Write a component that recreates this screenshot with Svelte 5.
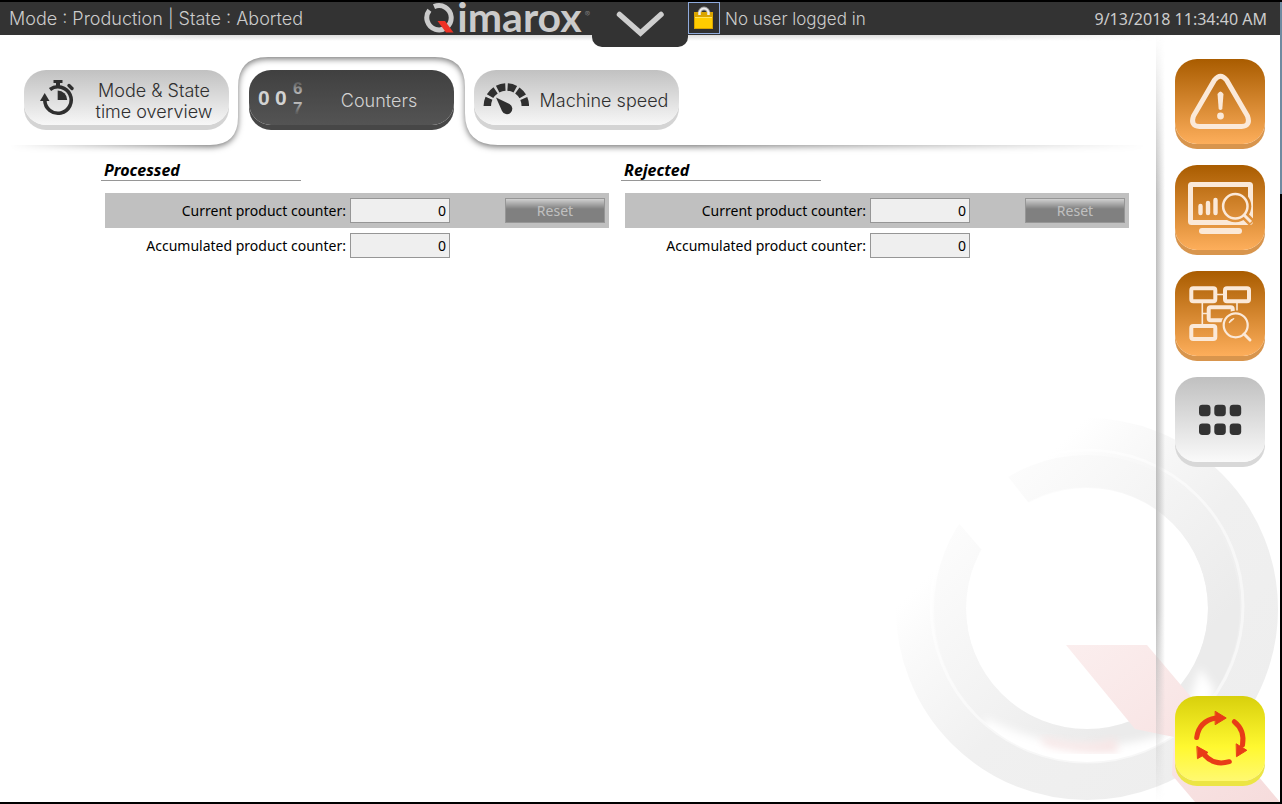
<script>
  let active = $state('counters');
  const groups = [
    { id: 'processed', title: 'Processed', current: 0, accumulated: 0 },
    { id: 'rejected', title: 'Rejected', current: 0, accumulated: 0 }
  ];
</script>

<div class="frame">
  <div class="app">
    <svg class="watermark" viewBox="880 400 400 402" aria-hidden="true">
      <defs>
        <linearGradient id="ring" gradientUnits="userSpaceOnUse" x1="880" y1="400" x2="1280" y2="800">
          <stop offset="0.28" stop-color="#fff" />
          <stop offset="0.36" stop-color="#fafafa" />
          <stop offset="0.56" stop-color="#f0f0f0" />
          <stop offset="1" stop-color="#ededed" />
        </linearGradient>
        <linearGradient id="bevel" gradientUnits="userSpaceOnUse" x1="880" y1="400" x2="1280" y2="800">
          <stop offset="0.2" stop-color="#fefefe" />
          <stop offset="0.36" stop-color="#f8f8f8" />
          <stop offset="0.7" stop-color="#ebebeb" />
        </linearGradient>
        <linearGradient id="tail" x1="0" y1="0" x2="1" y2="1">
          <stop offset="0" stop-color="#fbeeee" />
          <stop offset="1" stop-color="#f6dcdc" />
        </linearGradient>
        <filter id="soft"><feGaussianBlur stdDeviation="4" /></filter>
        <mask id="gap" maskUnits="userSpaceOnUse" x="880" y="400" width="400" height="402">
          <rect x="880" y="400" width="400" height="402" fill="#fff" />
          <path d="M981 549L920 478L975 435L1028 502L1045 560Z" fill="#000" />
        </mask>
        <clipPath id="inner"><path clip-rule="evenodd" d="M934 609a153 153 0 1 0 306 0a153 153 0 1 0-306 0ZM966 608a121 121 0 1 0 242 0a121 121 0 1 0-242 0Z" /></clipPath>
      </defs>
      <g mask="url(#gap)" fill="none">
        <circle cx="1087" cy="609" r="156" stroke="url(#ring)" stroke-width="70" />
        <circle cx="1087" cy="608" r="137" stroke="url(#bevel)" stroke-width="32" />
        <circle cx="1087" cy="606" r="156" stroke="#fff" stroke-opacity="0.5" stroke-width="3" />
      </g>
      <g clip-path="url(#inner)">
        <path d="M985 718Q1085 768 1180 728L1200 668L1215 690L1190 770H980Z" fill="#fff" filter="url(#soft)" />
        <path d="M1040 736Q1085 750 1115 738L1118 752Q1080 754 1045 745Z" fill="#f7e4e4" filter="url(#soft)" />
      </g>
      <path d="M1066 645H1147L1280 802H1195L1172 775L1174 737L1135 729Z" fill="url(#tail)" />
    </svg>

    <header>
      <div class="head-left">
        <span class="status">Mode : Production | State : Aborted</span>
        <div class="logo">
          <svg width="31" height="33" viewBox="0 0 31 33" aria-label="Q">
            <path d="M10 4.600A12.200 12.200 0 1 1 5.400 8.200" fill="none" stroke="#cbcbcb" stroke-width="5" />
            <path d="M13.500 19H21L29.500 30.500H22Z" fill="#ee3124" />
          </svg>
          <span class="word">imarox</span><span class="reg">®</span>
        </div>
      </div>
      <button class="notch" aria-label="Open menu">
        <svg width="96" height="45" viewBox="0 0 96 45"><path d="M27.500 12.500L48.500 31L69 12.500" fill="none" stroke="#cecece" stroke-width="5.500" stroke-linecap="round" /></svg>
      </button>
      <div class="head-right">
        <div class="user">
          <button class="lock" aria-label="Log in">
            <svg width="30" height="30" viewBox="0 0 30 30">
              <path d="M10.500 14V10.500a4.500 5 0 0 1 9 0V14" fill="none" stroke="#999" stroke-width="4" />
              <path d="M10.500 14V10.500a4.500 5 0 0 1 9 0V14" fill="none" stroke="#eee" stroke-width="2" />
              <rect x="5" y="9" width="19" height="17" fill="#d9a400" />
              <path d="M10.500 12V9M19.500 12V9" stroke="#eee" stroke-width="2.500" />
              <rect x="6" y="14" width="17" height="11" fill="#fc0" />
              <path d="M6 14.500H23" stroke="#ffe45c" />
            </svg>
          </button>
          <span>No user logged in</span>
        </div>
        <time>9/13/2018 11:34:40 AM</time>
      </div>
    </header>

    <div class="body">
      <main>
        <nav>
          <svg class="sheet" aria-hidden="true">
            <path d="M-20 -60V110H210Q238 110 238 82V52Q238 22 268 22H435Q465 22 465 52V78Q465 110 498 110H4000V-60Z" fill="#fff" />
          </svg>
          <button class="tab" class:on={active === 'mode'} onclick={() => (active = 'mode')}>
            <svg width="55" height="55" viewBox="0 0 55 55" fill="none" stroke="currentColor">
              <path d="M26 19.500A13.200 13.200 0 1 1 20.800 30" stroke-width="3.600" />
              <path d="M16 31L20.700 23L25.500 31Z" fill="currentColor" stroke="none" />
              <path d="M29.500 11.500H38.500" stroke-width="3" />
              <path d="M34 12V17" stroke-width="4" />
              <path d="M45 15.500L48 18.500" stroke-width="3.400" stroke-linecap="round" />
              <path d="M33.700 30V20.500A9.500 9.500 0 0 1 43.200 30Z" fill="currentColor" stroke="none" />
            </svg>
            <span>Mode &amp; State<br />time overview</span>
          </button>
          <button class="tab" class:on={active === 'counters'} onclick={() => (active = 'counters')}>
            <svg class="digits" width="55" height="55" viewBox="0 0 55 55">
              <defs>
                <linearGradient id="fadeUp" gradientUnits="userSpaceOnUse" x1="0" y1="11" x2="0" y2="25"><stop offset="0" stop-color="currentColor" stop-opacity="0.1" /><stop offset="1" stop-color="currentColor" stop-opacity="0.9" /></linearGradient>
                <linearGradient id="fadeDown" gradientUnits="userSpaceOnUse" x1="0" y1="30" x2="0" y2="43"><stop offset="0" stop-color="currentColor" /><stop offset="1" stop-color="currentColor" stop-opacity="0.1" /></linearGradient>
              </defs>
              <text x="9" y="35" fill="currentColor">0</text>
              <text x="26" y="35" fill="currentColor">0</text>
              <text class="roll" x="44" y="24" fill="url(#fadeUp)">6</text>
              <text class="roll" x="44" y="44" fill="url(#fadeDown)">7</text>
            </svg>
            <span>Counters</span>
          </button>
          <button class="tab" class:on={active === 'speed'} onclick={() => (active = 'speed')}>
            <svg width="55" height="55" viewBox="0 0 55 55">
              <path d="M13.300 36A19 19 0 0 1 51.300 36" fill="none" stroke="currentColor" stroke-width="7.500" stroke-dasharray="8 2.340" />
              <path d="M22 27.500L35.500 34A5.400 5.400 0 1 1 28 41Z" fill="currentColor" />
            </svg>
            <span>Machine speed</span>
          </button>
        </nav>

        <div class="groups">
          {#each groups as g (g.id)}
            <section>
              <h2>{g.title}</h2>
              <div class="row shaded">
                <label for="{g.id}-current">Current product counter:</label>
                <input id="{g.id}-current" readonly value={g.current} />
                <button class="reset" disabled>Reset</button>
              </div>
              <div class="row">
                <label for="{g.id}-total">Accumulated product counter:</label>
                <input id="{g.id}-total" readonly value={g.accumulated} />
              </div>
            </section>
          {/each}
        </div>
      </main>

      <aside>
        <button class="tile orange" aria-label="Alarms">
          <svg viewBox="0 0 90 85" fill="none" stroke="currentColor" stroke-width="5">
            <path d="M39.500 21Q45.500 13.500 51.500 21L72.500 57Q76 67 66.500 67.500H24.500Q15 67 18.500 57Z" />
            <path d="M42.500 35Q45.500 30 48.500 35L47.300 50Q45.500 52 43.700 50Z" fill="currentColor" stroke="none" />
            <circle cx="45.500" cy="57" r="3.400" fill="currentColor" stroke="none" />
          </svg>
        </button>
        <button class="tile orange" aria-label="Monitoring">
          <svg viewBox="0 0 90 85" fill="none" stroke="currentColor">
            <mask id="lensA" maskUnits="userSpaceOnUse" x="0" y="0" width="90" height="85">
              <rect width="90" height="85" fill="#fff" stroke="none" />
              <circle cx="60.300" cy="41.300" r="16" fill="#000" stroke="none" />
              <path d="M66 47L77 58" stroke="#000" stroke-width="8" />
            </mask>
            <rect x="15.500" y="19.500" width="60" height="38" rx="1" stroke-width="5" mask="url(#lensA)" />
            <path d="M27 66H64" stroke-width="6" stroke-linecap="round" />
            <path d="M25.500 41V48M33 38V48M40.500 35V48" stroke-width="4.400" stroke-linecap="round" />
            <circle cx="60.300" cy="41.300" r="12.200" stroke-width="2.500" />
            <path d="M69 50L76 57" stroke-width="3" />
          </svg>
        </button>
        <button class="tile orange" aria-label="Process diagnosis">
          <svg viewBox="0 0 90 85" fill="none" stroke="currentColor">
            <mask id="lensB" maskUnits="userSpaceOnUse" x="0" y="0" width="90" height="85">
              <rect width="90" height="85" fill="#fff" stroke="none" />
              <circle cx="60.700" cy="54.300" r="14.500" fill="#000" stroke="none" />
            </mask>
            <g stroke-width="4" mask="url(#lensB)">
              <rect x="16.300" y="17.300" width="24" height="13" rx="2" />
              <rect x="50" y="17.300" width="24" height="13" rx="2" />
              <rect x="33.700" y="36.300" width="24" height="13" rx="2" />
              <rect x="16.300" y="55" width="24" height="13" rx="2" />
            </g>
            <path d="M42 23.500H48M27.300 32V53M27.300 42.500H32M62 32V39.500" stroke-width="1.600" />
            <circle cx="60.700" cy="54.300" r="12" stroke-width="2.200" />
            <path d="M69 63L75 69" stroke-width="3" stroke-linecap="round" />
            <path d="M54 52Q55 48 59 47.500Q57 50 54 52Z" fill="currentColor" />
          </svg>
        </button>
        <button class="tile grey" aria-label="Menu">
          <svg viewBox="0 0 90 85" fill="currentColor">
            {#each [27.700, 46.400] as y}
              {#each [24, 39.300, 54.700] as x}
                <rect {x} {y} width="11.500" height="11.500" rx="3.400" />
              {/each}
            {/each}
          </svg>
        </button>
        <button class="tile yellow" aria-label="Restart cycle">
          <svg viewBox="0 0 90 85" fill="none" stroke="currentColor" stroke-width="5" stroke-linecap="round">
            <path d="M21.700 41.500Q24 25 41 22" />
            <path d="M59.300 25.700Q70 34 67.500 49" />
            <path d="M54.300 65.700Q39 70 29.500 59" />
            <g fill="currentColor" stroke-width="1" stroke-linejoin="round">
              <path d="M40.500 15.500L51.200 22L40.500 28.500Z" />
              <path d="M61.500 48L71.800 54.300L61.800 60.500Z" />
              <path d="M22.200 50.500L33 56.500L22.800 62.500Z" />
            </g>
          </svg>
        </button>
      </aside>
    </div>
  </div>
</div>

<style>
  :global(body) { margin: 0; }
  .frame {
    box-sizing: border-box;
    min-height: 100vh;
    display: flex;
    padding: 2px 2px 2px 0;
    background: linear-gradient(#000 2px, #6f8aa0 2px, #6f8aa0 194px, #000 194px);
    font: 14px/20px "Noto Sans", "Open Sans", sans-serif;
  }
  .app {
    position: relative;
    flex: 1;
    min-width: 0;
    display: flex;
    flex-direction: column;
    background: #fff;
  }
  button { font: inherit; border: 0; padding: 0; cursor: pointer; }
  svg { display: block; }
  .watermark { position: absolute; right: 0; bottom: 0; width: 400px; height: 402px; }

  header {
    position: relative;
    z-index: 2;
    display: grid;
    grid-template-columns: 1fr 96px 1fr;
    height: 33px;
    background: #333;
    color: #ccc;
    font: 300 17px/34px Inter, sans-serif;
    white-space: nowrap;
  }
  header::after {
    content: "";
    position: absolute;
    inset: 33px 0 auto 0;
    height: 6px;
    background: linear-gradient(#ddd, #fff0);
    mask-image: linear-gradient(90deg, transparent 20px, #000 200px, #000 75%, transparent 92%);
  }
  .head-left, .head-right { display: flex; justify-content: space-between; }
  .head-left { padding-left: 9px; }
  .head-right { padding-right: 13px; }
  .status { font-size: 18px; }
  .logo { display: flex; color: #cbcbcb; }
  .word { font: 700 41px/30px Lato, sans-serif; margin-left: 2px; }
  .reg { font-size: 8px; line-height: 24px; color: #888; margin: 0 2px 0 3px; }
  .notch {
    position: relative;
    z-index: 1;
    height: 45px;
    border-radius: 0 0 10px 10px;
    background: #333;
  }
  .user { display: flex; gap: 5px; }
  .lock { width: 32px; height: 32px; border: 1px solid #8fabdc; background: #303030; }
  time { font: 16px/34px "Noto Sans", sans-serif; }

  .body { position: relative; flex: 1; display: flex; }
  main { flex: 1; min-width: 0; }
  nav { position: relative; display: flex; gap: 20px; padding: 35px 24px 15px; }
  .sheet {
    position: absolute;
    inset: 0;
    width: 100%;
    height: 125px;
    mask-image: linear-gradient(90deg, transparent 10px, #000 210px, #000 60%, transparent 99%);
  }
  .sheet path { filter: drop-shadow(0 2px 3px #0008); }
  .tab {
    position: relative;
    flex: 0 0 205px;
    height: 55px;
    margin-bottom: 5px;
    display: flex;
    align-items: center;
    border-radius: 22px;
    color: #2f2f2f;
    background: linear-gradient(#c1c1c1, #f7f7f7);
    box-shadow: 0 5px 0 #d4d4d4;
    font: 300 18px/21px Inter, sans-serif;
    white-space: nowrap;
  }
  .tab span { flex: 1; padding-top: 6px; }
  .tab.on { color: #d2d2d2; background: linear-gradient(#404040, #545454); box-shadow: 0 5px 0 #474747; }
  .digits text { font: 700 21px "Liberation Sans", sans-serif; }
  .digits .roll { font-size: 17px; }

  .groups {
    display: grid;
    grid-template-columns: repeat(2, 1fr);
    gap: 16px;
    padding: 16px 28px 0 105px;
  }
  h2 {
    width: 197px;
    margin: 0 0 12px -4px;
    padding-left: 3px;
    border-bottom: 1px solid #969696;
    font: italic 700 16px/19px "Noto Sans", sans-serif;
  }
  .row {
    display: grid;
    grid-template-columns: 1fr 100px 155px;
    align-items: center;
    height: 35px;
    padding-right: 4px;
  }
  .shaded { background: #c0c0c0; }
  label { text-align: right; padding-right: 4px; white-space: nowrap; }
  input {
    box-sizing: border-box;
    width: 100px;
    height: 25px;
    border: 1px solid #969696;
    padding: 0 3px;
    background: #efefef;
    color: #000;
    font: inherit;
    text-align: right;
  }
  .reset {
    justify-self: end;
    width: 100px;
    height: 25px;
    border: 1px solid #969696;
    background: linear-gradient(#d0d0d0, #808080 10px);
    color: #c0c0c0;
  }

  aside {
    position: relative;
    display: flex;
    flex-direction: column;
    gap: 21px;
    padding: 24px 15px 21px 18px;
  }
  aside::before {
    content: "";
    position: absolute;
    inset: 0 auto 0 -1px;
    width: 9px;
    background: linear-gradient(90deg, #bdbdbd, #bdbdbd00);
    mask-image: linear-gradient(transparent, #000 160px, #000 75%, transparent);
  }
  .tile { position: relative; width: 90px; height: 85px; border-radius: 22px; }
  .orange { color: #fbe9d8; background: linear-gradient(#a95c00, #fdae5b); box-shadow: 0 5px 0 #d8954d; }
  .grey { color: #333; background: linear-gradient(#c0c0c0, #fafafa); box-shadow: 0 5px 0 #d8d8d8; }
  .yellow { margin-top: auto; color: #e83c17; background: linear-gradient(#d8d00c, #fff830 60%, #fff970); box-shadow: 0 5px 0 #ece545; }
</style>
